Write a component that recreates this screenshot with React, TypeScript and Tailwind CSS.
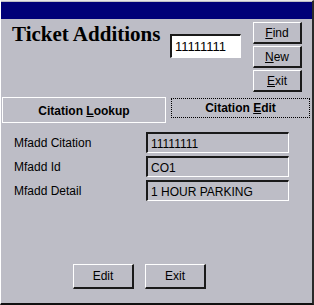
import React from 'react'

const sans = { fontFamily: '"Liberation Sans", Arial, sans-serif' }

function WinButton({ label, u, className }: { label: string; u?: boolean; className: string }) {
  return (
    <div
      className={`flex items-center justify-center border-t border-l border-t-white border-l-white border-r-2 border-b-2 border-r-[#1a1a1a] border-b-[#1a1a1a] text-[12px] text-black ${className}`}
      style={sans}
    >
      {u ? (
        <span>
          <span className="underline">{label[0]}</span>
          {label.slice(1)}
        </span>
      ) : (
        label
      )}
    </div>
  )
}

function Field({ label, value }: { label: string; value: string }) {
  return (
    <div className="flex items-start">
      <div className="w-[145px] pl-[13px] pt-[2px] text-[12px] text-black" style={sans}>
        {label}
      </div>
      <div
        className="flex h-[21px] w-[143px] items-center border-t-2 border-l-2 border-t-[#1a1a1a] border-l-[#1a1a1a] border-r border-b border-r-white border-b-white pl-[3px] pt-[2px] text-[12px] text-black"
        style={sans}
      >
        {value}
      </div>
    </div>
  )
}

export default function App() {
  return (
    <div className="h-[305px] w-[314px] bg-[#bdbdc6]">
      <div className="flex h-[305px] w-[314px] flex-col border-t border-l border-t-[#e8e8e8] border-l-white border-r-2 border-b-2 border-r-[#2a2a2a] border-b-[#111]">
        {/* title bar */}
        <div className="mt-[1px] h-[17px] w-full bg-[#000078]" />

        {/* header */}
        <div className="flex h-[75px] items-start">
          <div
            className="ml-[11px] mt-[1px] w-[147px] whitespace-nowrap text-[21px] font-bold leading-[28px] text-black"
            style={{ fontFamily: '"Liberation Serif", "Times New Roman", serif' }}
          >
            Ticket Additions
          </div>
          <div
            className="ml-[11px] mt-[15px] flex h-[24px] w-[71px] items-center border-t-2 border-l-2 border-t-[#1a1a1a] border-l-[#1a1a1a] border-r border-b border-r-white border-b-white bg-white pl-[3px] text-[13px] text-black"
            style={sans}
          >
            11111111
          </div>
          <div className="ml-[12px] mt-[3px] flex flex-col gap-[2px]">
            <WinButton label="Find" u className="h-[22px] w-[49px]" />
            <WinButton label="New" u className="h-[22px] w-[49px]" />
            <WinButton label="Exit" u className="h-[22px] w-[49px]" />
          </div>
        </div>

        {/* tabs */}
        <div className="flex items-start">
          <div
            className="ml-[1px] mt-[3px] flex h-[26px] w-[164px] items-center justify-center border border-white pt-[2px] text-[12px] font-bold text-black"
            style={sans}
          >
            <span>
              Citation <span className="underline">L</span>ookup
            </span>
          </div>
          <div
            className="ml-[5px] mt-[4px] flex h-[20px] w-[139px] items-center justify-center border border-dotted border-black text-[12px] font-bold text-black"
            style={sans}
          >
            <span>
              Citation <span className="underline">E</span>dit
            </span>
          </div>
        </div>

        {/* fields */}
        <div className="mt-[9px] flex flex-col gap-[3px]">
          <Field label="Mfadd Citation" value="11111111" />
          <Field label="Mfadd Id" value="CO1" />
          <Field label="Mfadd Detail" value="1 HOUR PARKING" />
        </div>

        {/* bottom buttons */}
        <div className="mt-[63px] flex gap-[11px] pl-[72px]">
          <WinButton label="Edit" className="h-[25px] w-[61px]" />
          <WinButton label="Exit" className="h-[25px] w-[61px]" />
        </div>
      </div>
    </div>
  )
}
